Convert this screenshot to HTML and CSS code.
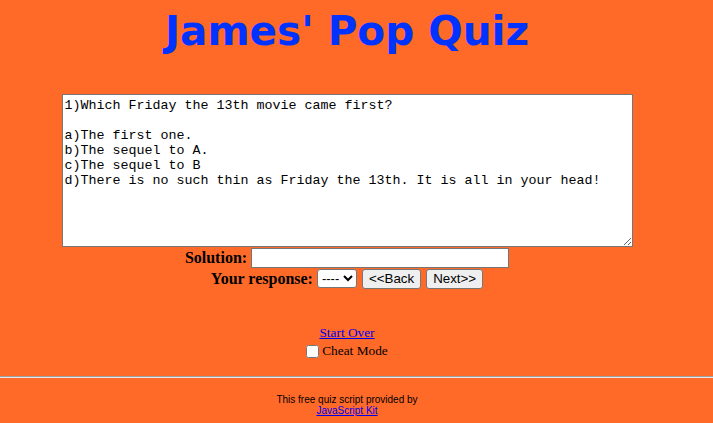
FILE: index.html
```html
<!DOCTYPE html>
<html>
<head>
<meta charset="utf-8">
<link rel="stylesheet" href="styles.css">
</head>
<body>
<div class="page">
<h1 class="title">James' Pop Quiz</h1>
<form class="quiz">
<textarea class="question" rows="10" cols="80">1)Which Friday the 13th movie came first?

a)The first one.
b)The sequel to A.
c)The sequel to B
d)There is no such thin as Friday the 13th. It is all in your head!</textarea>
<div class="row"><b class="label">Solution:</b><input class="solution" type="text"></div>
<div class="row"><b class="label">Your response:</b><select class="resp"><option>----</option></select><button type="button" class="btn">&lt;&lt;Back</button><button type="button" class="btn">Next&gt;&gt;</button></div>
<div class="extras">
<a href="#" class="start">Start Over</a>
<label class="cheat"><input type="checkbox" class="cb">Cheat Mode</label>
</div>
</form>
</div>
<hr class="rule">
<div class="footer">This free quiz script provided by<br><a href="#">JavaScript Kit</a></div>
</body>
</html>
```
FILE: styles.css
```css
html, body { margin: 0; padding: 0; }
body {
  background: #ff6a28;
  font-family: "Liberation Serif", serif;
  font-size: 16px;
  color: #000;
}
.page { padding-right: 19px; }
.title {
  margin: 0;
  padding-top: 8px;
  text-align: center;
  font-family: "DejaVu Sans", Verdana, sans-serif;
  font-weight: bold;
  font-size: 40.5px;
  line-height: 46px;
  color: #0033ff;
}
.quiz {
  display: flex;
  flex-direction: column;
  align-items: center;
  margin-top: 40px;
}
.question {
  width: 571px;
  height: 153px;
  box-sizing: border-box;
  margin: 0;
  padding: 3px 2px 2px;
  font-family: "Liberation Mono", monospace;
  font-size: 13.33px;
  line-height: 15px;
  border: 1px solid #767676;
  background: #fff;
  resize: both;
}
.row {
  display: flex;
  align-items: center;
  gap: 4px;
  height: 21px;
}
.label { font-weight: bold; }
.solution {
  width: 258px;
  height: 20px;
  box-sizing: border-box;
  border: 1px solid #767676;
  margin: 0;
  padding: 0 2px;
}
.resp {
  width: 40px;
  height: 19px;
  font-family: Arial, "Liberation Sans", sans-serif;
  font-size: 13px;
  border: 1px solid #767676;
  border-radius: 3px;
  background: #fff;
  margin: 0;
}
.btn {
  height: 20px;
  font-family: "Liberation Sans", sans-serif;
  font-size: 13.33px;
  padding: 0 6px;
  border: 1px solid #767676;
  border-radius: 3px;
  background: #efefef;
  margin: 0 0 0 1px;
}
.extras {
  display: flex;
  flex-direction: column;
  align-items: center;
  margin-top: 35px;
}
.start { color: #0000ee; font-size: 13.33px; line-height: 18px; }
.cheat { font-size: 13.33px; line-height: 18px; display: flex; align-items: center; }
.cb { margin: 0 3px 0 0; width: 13px; height: 13px; }
.rule {
  margin: 16px 0 0 0;
  border: none;
  border-top: 1px solid #a0a0a0;
  border-bottom: 1px solid #e8e8e8;
  height: 0;
}
.footer {
  text-align: center;
  padding-right: 19px;
  font-family: "Liberation Sans", Arial, sans-serif;
  font-size: 10px;
  line-height: 11px;
  margin-top: 16px;
}
.footer a { color: #0000ee; }
```
